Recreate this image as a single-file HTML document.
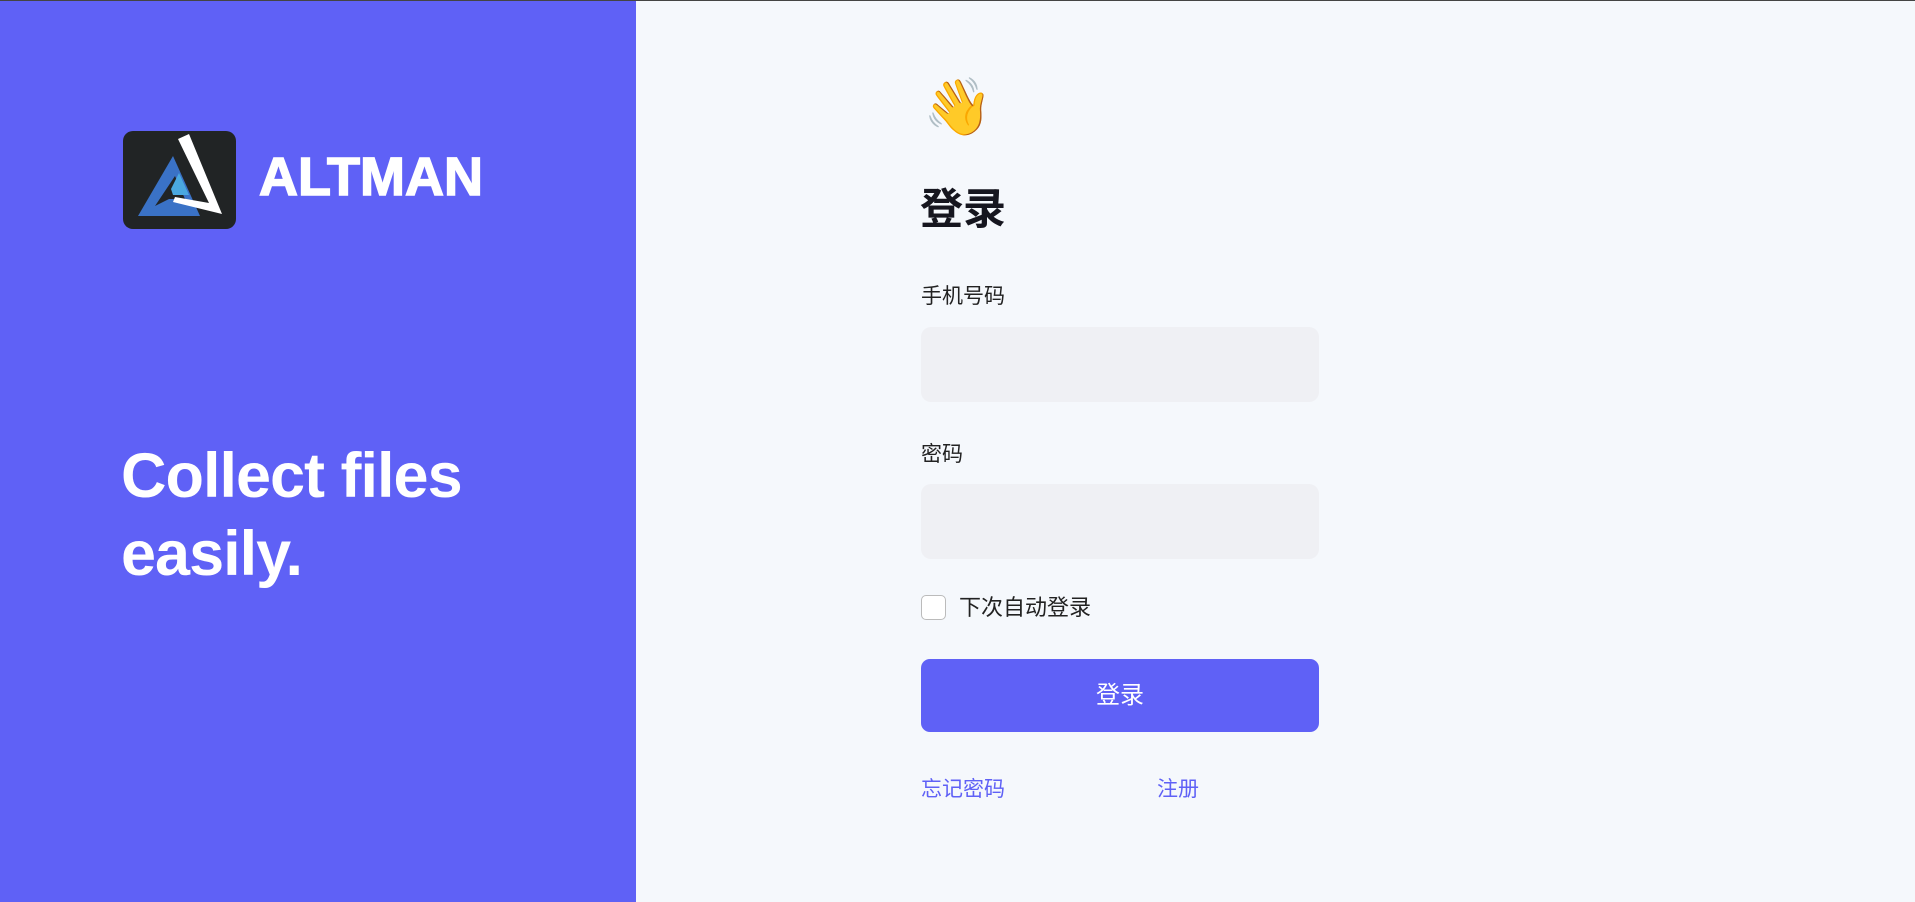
<!DOCTYPE html>
<html><head><meta charset="utf-8"><style>
*{margin:0;padding:0;box-sizing:border-box}
html,body{width:1915px;height:902px;overflow:hidden;background:#F5F8FC;font-family:"Liberation Sans","Noto Sans CJK SC",sans-serif}
.topline{position:absolute;left:0;top:0;width:1915px;height:1px;background:#444}
.left{position:absolute;left:0;top:1px;width:636px;height:901px;background:#5F61F6}
.logo{position:absolute;left:123px;top:130px;width:113px;height:98px;background:#212425;border-radius:10px;overflow:hidden}
.brand{position:absolute;left:259px;top:146px;color:#fff;font-weight:900;font-size:54px;letter-spacing:0px;line-height:60px;-webkit-text-stroke:1.5px #fff}
.tag{position:absolute;left:121px;top:436px;color:#fff;font-weight:bold;font-size:63px;line-height:78px;letter-spacing:-1px}
.abs{position:absolute}
.lbl{position:absolute;left:921px;font-size:21px;color:#222;line-height:24px}
.inp{position:absolute;left:921px;width:398px;height:75px;background:#EFF0F4;border-radius:10px}
.btn{position:absolute;left:921px;top:659px;width:398px;height:73px;background:#5F61F6;border-radius:9px;color:#fff;font-size:24px;text-align:center;line-height:73px}
.lnk{position:absolute;top:778px;font-size:21px;color:#5F61F6;line-height:24px}
</style></head><body>
<div class="topline"></div>
<div class="left">
 <div class="logo"><svg width="113" height="98" viewBox="0 0 113 98">
  <polygon points="15,85 50,25 77,85" fill="#3A72C6"/>
  <polygon points="32,75 52,45 62,68 46,68" fill="#212425"/>
  <polygon points="48,58 56,42 66,64 50,64" fill="#4AA8E0"/>
  <polygon points="55,8 66,3 99,83 50,71 52,66 86,72" fill="#fff"/>
 </svg></div>
 <div class="brand">ALTMAN</div>
 <div class="tag">Collect files<br>easily.</div>
</div>
<div class="abs" style="left:923px;top:72px;font-size:56px;line-height:70px;font-family:'Noto Color Emoji','DejaVu Sans',sans-serif">👋</div>
<div class="abs" style="left:920px;top:184px;font-size:43px;font-weight:bold;color:#16161f;line-height:52px">登录</div>
<div class="lbl" style="top:285px">手机号码</div>
<div class="inp" style="top:327px"></div>
<div class="lbl" style="top:443px">密码</div>
<div class="inp" style="top:484px"></div>
<div class="abs" style="left:921px;top:595px;width:25px;height:25px;border:1px solid #bbb;border-radius:5px;background:#fff"></div>
<div class="lbl" style="left:959px;top:596px;font-size:22px">下次自动登录</div>
<div class="btn">登录</div>
<div class="lnk" style="left:921px">忘记密码</div>
<div class="lnk" style="left:1157px">注册</div>
</body></html>
